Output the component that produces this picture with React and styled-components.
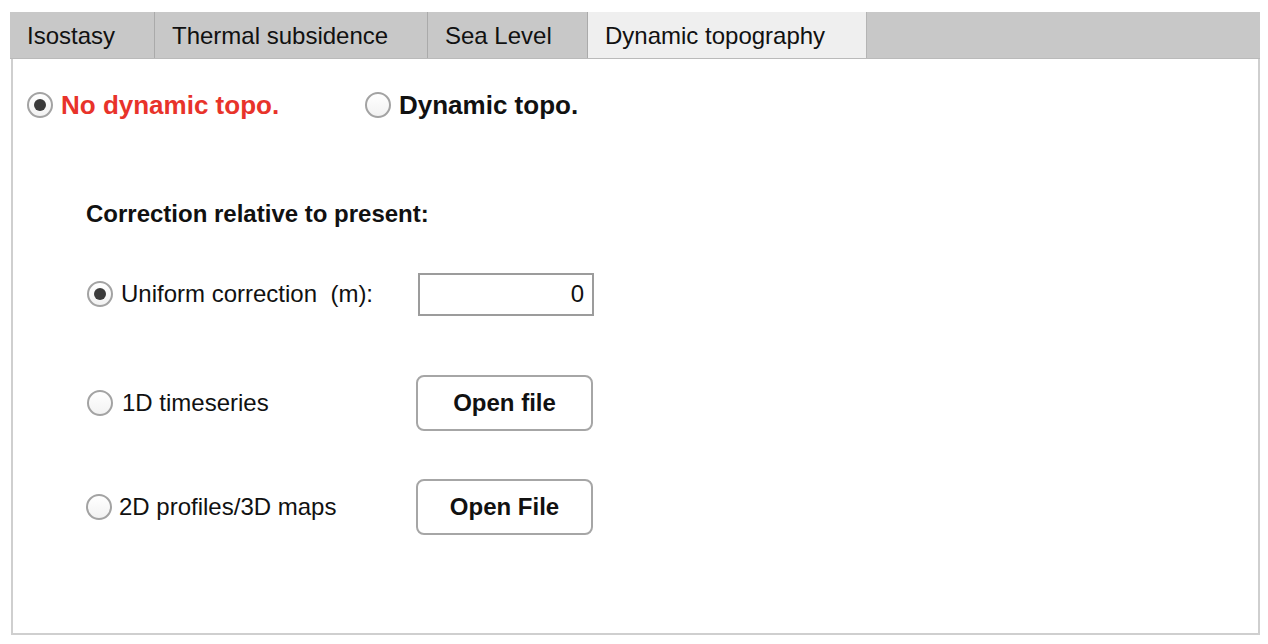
import React, { useState } from "react";
import styled, { createGlobalStyle } from "styled-components";

const GlobalStyle = createGlobalStyle`
  html, body {
    margin: 0;
    padding: 0;
    background: #ffffff;
    font-family: "Liberation Sans", Arial, sans-serif;
    color: #111;
  }
`;

// #region - styling -

const Page = styled.div`
  width: 1268px;
  height: 644px;
  padding: 12px 8px 9px 10px;
  box-sizing: border-box;
  display: flex;
  flex-direction: column;
`;

const TabBar = styled.div`
  height: 46px;
  background: #c8c8c8;
  border-bottom: 1px solid #bababa;
  display: flex;
  flex-shrink: 0;
`;

const Tab = styled.div`
  width: ${(p) => p.$width}px;
  height: 100%;
  padding: 2px 0 0 17px;
  display: flex;
  align-items: center;
  font-size: 24px;
  color: #111;
  white-space: nowrap;
  background: ${(p) => (p.$active ? "#efefef" : "transparent")};
  border-right: 1px solid ${(p) => (p.$active ? "#b4b4b4" : "#aaaaaa")};
  box-sizing: border-box;
  cursor: default;
`;

const Panel = styled.div`
  flex: 1;
  border: 2px solid #cfcfcf;
  border-top: none;
  margin-left: 1px;
  padding: 26px 0 0 14px;
  background: #fff;
`;

const ModeRow = styled.div`
  height: 40px;
  display: flex;
  align-items: center;
`;

const RadioLabel = styled.label`
  display: flex;
  align-items: center;
  gap: ${(p) => p.$gap || 8}px;
  width: ${(p) => (p.$width ? `${p.$width}px` : "auto")};
  font-size: ${(p) => p.$size || 24}px;
  font-weight: ${(p) => (p.$bold ? 700 : 400)};
  color: ${(p) => p.$color || "#111"};
  cursor: default;
`;

const RadioCircle = styled.span`
  width: 26px;
  height: 26px;
  border-radius: 50%;
  box-sizing: border-box;
  border: 2px solid #a3a3a3;
  background: linear-gradient(#ffffff, #f2f2f2);
  display: flex;
  align-items: center;
  justify-content: center;
  flex-shrink: 0;

  &::after {
    content: "";
    width: 12px;
    height: 12px;
    border-radius: 50%;
    background: #3a3a3a;
    display: ${(p) => (p.$checked ? "block" : "none")};
  }
`;

const Correction = styled.section`
  margin-left: 59px;
  margin-top: 75px;
`;

const Heading = styled.div`
  font-size: 24px;
  font-weight: 700;
  line-height: 28px;
`;

const OptionRow = styled.div`
  display: grid;
  grid-template-columns: ${(p) => p.$labelWidth}px 177px;
  align-items: center;
  height: 56px;
  margin-top: ${(p) => p.$top}px;
  margin-left: ${(p) => p.$indent || 0}px;
`;

const ValueBox = styled.input`
  width: 176px;
  height: 43px;
  box-sizing: border-box;
  border: 2px solid #9c9c9c;
  padding: 0 8px;
  text-align: right;
  font-family: "Liberation Sans", Arial, sans-serif;
  font-size: 24px;
  color: #111;
  outline: none;
  margin-left: 2px;
`;

const FileButton = styled.button`
  width: 177px;
  height: 56px;
  box-sizing: border-box;
  border: 2px solid #a6a6a6;
  border-radius: 8px;
  background: #fff;
  font-family: "Liberation Sans", Arial, sans-serif;
  font-size: 24px;
  font-weight: 700;
  color: #111;
  cursor: default;
`;

// #endregion

const Radio = ({ checked, children, onClick, ...rest }) => (
  <RadioLabel onClick={onClick} {...rest}>
    <RadioCircle $checked={checked} />
    <span>{children}</span>
  </RadioLabel>
);

const tabs = [
  { label: "Isostasy", width: 145 },
  { label: "Thermal subsidence", width: 273 },
  { label: "Sea Level", width: 160 },
  { label: "Dynamic topography", width: 279 },
];

export default function App() {
  const [mode, setMode] = useState("none");
  const [source, setSource] = useState("uniform");
  const [value, setValue] = useState("0");

  return (
    <Page>
      <GlobalStyle />
      <TabBar>
        {tabs.map((t, i) => (
          <Tab key={t.label} $width={t.width} $active={i === 3}>
            {t.label}
          </Tab>
        ))}
      </TabBar>
      <Panel>
        <ModeRow>
          <Radio
            checked={mode === "none"}
            onClick={() => setMode("none")}
            $bold
            $size={26}
            $color="#e8332a"
            $width={338}
          >
            No dynamic topo.
          </Radio>
          <Radio
            checked={mode === "dyn"}
            onClick={() => setMode("dyn")}
            $bold
            $size={26}
          >
            Dynamic topo.
          </Radio>
        </ModeRow>

        <Correction>
          <Heading>Correction relative to present:</Heading>

          <OptionRow $labelWidth={329} $top={38} $indent={1}>
            <Radio checked={source === "uniform"} onClick={() => setSource("uniform")}>
              Uniform correction&nbsp;&nbsp;(m):
            </Radio>
            <ValueBox value={value} onChange={(e) => setValue(e.target.value)} />
          </OptionRow>

          <OptionRow $labelWidth={329} $top={53} $indent={1}>
            <Radio
              checked={source === "1d"}
              onClick={() => setSource("1d")}
              $gap={9}
            >
              1D timeseries
            </Radio>
            <FileButton>Open file</FileButton>
          </OptionRow>

          <OptionRow $labelWidth={330} $top={48} $indent={0}>
            <Radio
              checked={source === "2d"}
              onClick={() => setSource("2d")}
              $gap={7}
            >
              2D profiles/3D maps
            </Radio>
            <FileButton>Open File</FileButton>
          </OptionRow>
        </Correction>
      </Panel>
    </Page>
  );
}
